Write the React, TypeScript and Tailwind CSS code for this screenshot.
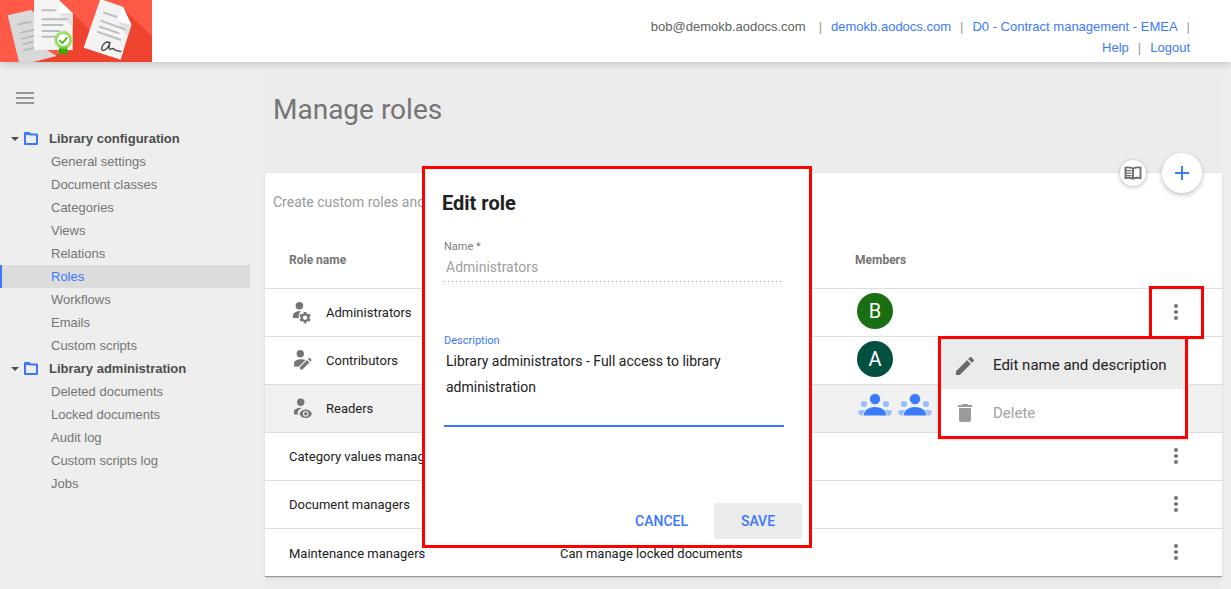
import type { ReactNode } from "react";
import { MdAdd, MdDelete, MdEdit, MdMoreVert } from "react-icons/md";

const sections = [
  {
    title: "Library configuration",
    items: [
      "General settings",
      "Document classes",
      "Categories",
      "Views",
      "Relations",
      "Roles",
      "Workflows",
      "Emails",
      "Custom scripts",
    ],
  },
  {
    title: "Library administration",
    items: ["Deleted documents", "Locked documents", "Audit log", "Custom scripts log", "Jobs"],
  },
];

function Logo() {
  return (
    <svg viewBox="0 0 456 186" className="h-[62px] w-[152px] shrink-0" role="img" aria-label="Contracts">
      <rect width="456" height="186" fill="#ff5a47" />
      <path d="M178 0L366 186H60L165 166L216 150V39Z" fill="#ee432e" />
      <path d="M366 22L456 110V186H340Z" fill="#ee432e" />
      <path d="M23 46L92 30L104 38L140 150L170 168L100 186H57Z" fill="#d9d9d9" />
      <g stroke="#b9babd" strokeWidth="5">
        <path d="M53 74L94 65M58 99L104 89M63 117L104 107M68 134L104 124M70 151L104 143" />
      </g>
      <path d="M102 0H176L218 40V150H102Z" fill="#f4f4f4" />
      <path d="M176 0L218 40V82L176 40Z" fill="#e2e2e2" />
      <path d="M176 0L218 40H176Z" fill="#fff" />
      <path d="M125 31H167M125 58H202M125 75H190M125 93H180M125 110H168" stroke="#bcbdc2" strokeWidth="6" />
      <path d="M177 138H202V168L190 158L177 168Z" fill="#2fae00" />
      <circle cx="190" cy="120" r="25" fill="none" stroke="#8bd84e" strokeWidth="5" strokeDasharray="5 2.85" />
      <circle cx="190" cy="120" r="21" fill="#fff" stroke="#8bd84e" strokeWidth="5" />
      <path d="M178 120L187 129L202 112" fill="none" stroke="#37b500" strokeWidth="5" />
      <path d="M301 -3L310 0L369 20L394 74L362 179L251 143Z" fill="#f3f3f3" />
      <path d="M354 64L394 74L383 111Z" fill="#e0e1e4" />
      <path d="M369 21L394 74L354 64Z" fill="#fff" />
      <path d="M310 37L351 51M302 62L375 88M297 79L358 100M291 95L363 120" stroke="#bcbdc2" strokeWidth="6" />
      <path
        d="M330 130C322 120 306 132 305 146C305 156 320 150 326 138L330 126L327 143C328 155 337 141 342 147C344 153 350 150 364 155"
        fill="none"
        stroke="#444"
        strokeWidth="4"
      />
    </svg>
  );
}

function FolderIcon() {
  return (
    <svg viewBox="0 0 14 13" className="h-[13px] w-[14px]" aria-hidden="true">
      <path d="M1 3V1H5L6.500 2.500H13V12H1Z" fill="none" stroke="#3b78ff" strokeWidth="2" strokeLinejoin="round" />
      <path d="M1 1H5.500L7 3H1Z" fill="#3b78ff" />
    </svg>
  );
}

function Sidebar() {
  return (
    <aside className="w-[250px] shrink-0 pt-[29px] font-['Liberation_Sans',Arial,sans-serif] text-[13px]">
      <button type="button" aria-label="Toggle menu" className="ml-4 block py-px">
        <svg viewBox="0 0 18 12" className="h-3 w-[18px]" aria-hidden="true">
          <path d="M0 1H18M0 6H18M0 11H18" stroke="#979797" strokeWidth="2" />
        </svg>
      </button>
      <nav className="mt-[22px]" aria-label="Library">
        {sections.map((section) => (
          <div key={section.title}>
            <h2 className="flex h-[23px] items-center pl-[11px] font-bold text-[#4d4d4d]">
              <svg viewBox="0 0 8 4" className="mr-[5px] h-1 w-2" aria-hidden="true">
                <path d="M0 0H8L4 4Z" fill="#4d4d4d" />
              </svg>
              <FolderIcon />
              <span className="ml-[11px]">{section.title}</span>
            </h2>
            <ul>
              {section.items.map((item) => (
                <li key={item}>
                  <a
                    href="#"
                    className={
                      item === "Roles"
                        ? "flex h-[23px] items-center border-l-2 border-[#3b78ff] bg-[#dcdcdc] pl-[49px] text-[#3b78ff]"
                        : "flex h-[23px] items-center pl-[51px] text-[#757575]"
                    }
                  >
                    {item}
                  </a>
                </li>
              ))}
            </ul>
          </div>
        ))}
      </nav>
    </aside>
  );
}

const gear =
  "M19.14 12.94c.04-.3.06-.61.06-.94 0-.32-.02-.64-.07-.94l2.03-1.58c.18-.14.23-.41.12-.61l-1.920-3.320c-.12-.22-.37-.29-.59-.22l-2.390.96c-.5-.38-1.030-.7-1.620-.94l-.36-2.540c-.04-.24-.24-.41-.48-.41h-3.840c-.24 0-.43.17-.47.41l-.36 2.540c-.59.24-1.130.57-1.620.94l-2.390-.96c-.22-.08-.47 0-.59.22L2.740 8.870c-.12.21-.08.47.12.61l2.030 1.580c-.05.3-.09.63-.09.94s.02.64.07.94l-2.030 1.580c-.18.14-.23.41-.12.61l1.920 3.320c.12.22.37.29.59.22l2.390-.96c.5.38 1.030.7 1.620.94l.36 2.540c.05.24.24.41.48.41h3.840c.24 0 .44-.17.47-.41l.36-2.540c.59-.24 1.130-.56 1.620-.94l2.390.96c.22.08.47 0 .59-.22l1.920-3.320c.12-.22.07-.47-.12-.61l-2.010-1.580zM12 15.600c-1.980 0-3.600-1.620-3.600-3.600s1.620-3.600 3.600-3.600 3.600 1.620 3.600 3.600-1.620 3.600-3.600 3.600z";

function RoleIcon({ kind }: { kind: "gear" | "pencil" | "eye" }) {
  return (
    <svg viewBox="0 0 24 24" className="h-6 w-6" fill="#757575" aria-hidden="true">
      {kind === "gear" && (
        <>
          <circle cx="9.400" cy="5.700" r="3.800" />
          <path d="M3 18V15.500C3 12.300 6.500 11 11 10.900C9 12.500 8.200 15.500 8.900 18Z" />
          <path d={gear} transform="translate(8 10.600) scale(0.59)" />
        </>
      )}
      {kind === "pencil" && (
        <>
          <circle cx="10.300" cy="5.700" r="3.700" />
          <path d="M4 18.500V15.500C4 12.500 8 11.200 11 11.200C13 11.200 14.500 11.600 15.500 12.100L9 18.500Z" />
          <path d="M9.800 21.700V19L17 11.800L19.700 14.500L12.500 21.700ZM17.700 11.100L18.800 10Q19.400 9.400 20 10L21.500 11.500Q22 12.100 21.500 12.700L20.400 13.800Z" stroke="#fff" strokeWidth="0.5" />
        </>
      )}
      {kind === "eye" && (
        <>
          <circle cx="10.700" cy="6.200" r="3.700" />
          <path d="M4 18.500V16C4 13 7.500 11.800 12 11.800C9.500 13 8 15 7.500 16.500Q7.800 17.700 8.500 18.500Z" />
          <path
            d="M15.700 13.500C12.800 13.500 10.400 15.200 9.400 17.800C10.400 20.400 12.800 22.100 15.700 22.100S21 20.400 22 17.800C21 15.200 18.600 13.500 15.700 13.500ZM15.700 20.600A2.800 2.800 0 1 1 15.700 15A2.800 2.800 0 0 1 15.700 20.600Z"
            fillRule="evenodd"
          />
          <circle cx="15.700" cy="17.800" r="1.700" />
        </>
      )}
    </svg>
  );
}

function GroupIcon() {
  return (
    <svg viewBox="0 0 36 24" className="h-6 w-9 shrink-0" role="img" aria-label="Group">
      <g fill="#9bbcff">
        <circle cx="7" cy="12" r="3.100" />
        <circle cx="29" cy="12" r="3.100" />
        <path d="M1 18.700Q4 17.500 9 18.200V23.500H5Q2.300 23.500 1.800 22ZM35 18.700Q32 17.500 27 18.200V23.500H31Q33.700 23.500 34.200 22Z" />
      </g>
      <path d="M6 24C6 17.500 12 14 18 14S30 17.500 30 24Z" fill="#f1f1f1" />
      <path d="M6.800 23.500C6.800 17.800 12.500 15 18 15S29.200 17.800 29.200 23.500Z" fill="#3b7bff" />
      <circle cx="18" cy="7" r="5.200" fill="#3b7bff" />
    </svg>
  );
}

function Avatar({ letter, color }: { letter: string; color: string }) {
  return (
    <span className={`flex size-9 items-center justify-center rounded-full text-xl text-white ${color}`}>
      {letter}
    </span>
  );
}

function ActionsMenu() {
  return (
    <div
      role="menu"
      className="absolute top-[47px] right-[34px] z-10 w-[250px] border-3 border-[#ff0000] bg-white text-left text-[15px] shadow-sm"
    >
      <button type="button" role="menuitem" className="flex h-[50px] w-full items-center bg-[#ebebeb] pl-3 pt-1 text-[#212121]">
        <MdEdit size={24} className="text-[#6a6a6a]" />
        <span className="ml-4 whitespace-nowrap">Edit name and description</span>
      </button>
      <button type="button" role="menuitem" disabled className="flex h-[47px] w-full items-center pt-[2px] pl-3 text-[#a3a3a3]">
        <MdDelete size={24} className="text-[#9b9b9b]" />
        <span className="ml-4">Delete</span>
      </button>
    </div>
  );
}

type Role = { name: string; description?: string; icon?: ReactNode; members?: ReactNode; menu?: boolean; active?: boolean };

const roles: Role[] = [
  { name: "Administrators", icon: <RoleIcon kind="gear" />, members: <Avatar letter="B" color="bg-[#196f12]" />, menu: true },
  { name: "Contributors", icon: <RoleIcon kind="pencil" />, members: <Avatar letter="A" color="bg-[#045040]" /> },
  {
    name: "Readers",
    icon: <RoleIcon kind="eye" />,
    members: (
      <span className="flex gap-1 pb-[6px]">
        <GroupIcon />
        <GroupIcon />
        <GroupIcon />
      </span>
    ),
    active: true,
  },
  { name: "Category values managers" },
  { name: "Document managers" },
  { name: "Maintenance managers", description: "Can manage locked documents" },
];

function RolesTable() {
  return (
    <table className="w-full table-fixed border-collapse text-left text-[13px] text-[#212121]">
      <colgroup>
        <col className="w-[295px]" />
        <col className="w-[295px]" />
        <col />
        <col className="w-[92px]" />
      </colgroup>
      <thead>
        <tr className="h-14 text-xs text-[#757575]">
          <th className="pl-6 font-bold">Role name</th>
          <th />
          <th className="font-bold">Members</th>
          <th />
        </tr>
      </thead>
      <tbody>
        {roles.map((role) => (
          <tr key={role.name} className={role.active ? "h-12 border-t border-[#dedede] bg-[#f1f1f1]" : "h-12 border-t border-[#dedede]"}>
            <td className="p-0 pl-6">
              <span className="flex items-center whitespace-nowrap">
                {role.icon && <span className="mr-3 pl-px">{role.icon}</span>}
                <span className="pt-[2px]">{role.name}</span>
              </span>
            </td>
            <td className="p-0 pt-[2px] whitespace-nowrap">{role.description}</td>
            <td className="p-0 pb-[2px] pl-[2px]">{role.members}</td>
            <td className="relative p-0">
              <button type="button" aria-label={`Actions for ${role.name}`} className="ml-[34px] block text-[#757575]">
                <MdMoreVert size={24} />
              </button>
              {role.menu && (
                <>
                  <span className="absolute -top-[3px] right-[18px] z-20 h-[53px] w-[55px] border-3 border-[#ff0000]" />
                  <ActionsMenu />
                </>
              )}
            </td>
          </tr>
        ))}
      </tbody>
    </table>
  );
}

function EditRoleDialog() {
  return (
    <form
      role="dialog"
      aria-labelledby="dialog-title"
      className="absolute top-[166px] left-[422px] z-30 w-[390px] border-3 border-[#ff0000] bg-white px-[7px] pt-[22px] pb-[6px]"
    >
      <h2 id="dialog-title" className="pl-[10px] text-xl leading-6 font-bold text-[#212121]">
        Edit role
      </h2>
      <div className="mr-[18px] ml-3">
        <label htmlFor="role-name" className="mt-6 block text-[11px] leading-4 text-[#7d7d7d]">
          Name *
        </label>
        <input
          id="role-name"
          disabled
          defaultValue="Administrators"
          className="block h-[26px] w-full bg-transparent px-[2px] pb-[3px] text-sm text-[#9e9e9e]"
        />
        <div className="h-px bg-[repeating-linear-gradient(to_right,#999_0,#999_1px,transparent_1px,transparent_4px)]" />
        <label htmlFor="role-description" className="mt-[51px] block text-[11px] leading-4 text-[#3b78ff]">
          Description
        </label>
        <textarea
          id="role-description"
          defaultValue="Library administrators - Full access to library administration"
          className="-mt-px block h-[79px] w-full resize-none border-b-2 border-[#3b78ff] px-[2px] text-sm leading-[26px] text-[#212121] outline-none"
        />
      </div>
      <div className="mt-[76px] flex justify-end text-sm font-medium text-[#3b78ff]">
        <button type="button" className="h-9 px-[26px]">
          CANCEL
        </button>
        <button type="button" className="h-9 w-[88px] rounded-xs bg-[#ebebeb]">
          SAVE
        </button>
      </div>
    </form>
  );
}

function Header() {
  const bar = <span className="text-[#9a9a9a]">|</span>;
  return (
    <header className="relative z-10 flex h-[62px] items-start justify-between bg-white font-['Liberation_Sans',Arial,sans-serif] text-[13px] leading-[21px] shadow-[0_1px_8px_rgba(0,0,0,0.22)]">
      <Logo />
      <div className="pt-4 pr-[41px] text-[#3b78ff]">
        <div className="flex justify-end gap-[9px]">
          <span className="mr-1 text-[#616161]">bob@demokb.aodocs.com</span>
          {bar}
          <a href="#">demokb.aodocs.com</a>
          {bar}
          <a href="#">D0 - Contract management - EMEA</a>
          {bar}
        </div>
        <div className="flex justify-end gap-[9px]">
          <a href="#">Help</a>
          {bar}
          <a href="#">Logout</a>
        </div>
      </div>
    </header>
  );
}

export default function App() {
  return (
    <div className="relative flex min-h-screen flex-col bg-[#eeeeee] font-[Roboto,sans-serif]">
      <Header />
      <div className="flex flex-1">
        <Sidebar />
        <main className="mt-[15px] mr-[9px] ml-[15px] min-w-0 flex-1 bg-[#ececec]">
          <h1 className="h-24 pt-[17px] pl-2 text-[28px] leading-8 text-[#757575]">Manage roles</h1>
          <section className="relative rounded-t-xs border-b border-[#999] bg-white shadow-sm">
            <div className="absolute -top-5 right-5 flex items-center gap-4">
              <button
                type="button"
                aria-label="Documentation"
                className="flex size-[26px] items-center justify-center rounded-full bg-white shadow-[0_1px_4px_rgba(0,0,0,0.3)]"
              >
                <svg viewBox="0 0 18 14" className="h-[14px] w-[18px]" fill="none" stroke="#6e6e6e" aria-hidden="true">
                  <path d="M9 2.500Q5 0.700 1.500 1.700V12.200Q5 11.200 9 12.700Q13 11.200 16.500 12.200V1.700Q13 0.700 9 2.500V12.700" strokeWidth="1.900" />
                  <path d="M2 4.700H7.500M2 7.200H7.500M2 9.700H7.500" strokeWidth="1.300" />
                </svg>
              </button>
              <button
                type="button"
                aria-label="Add role"
                className="flex size-10 items-center justify-center rounded-full bg-white text-[#3b78ff] shadow-[0_2px_5px_rgba(0,0,0,0.25)]"
              >
                <MdAdd size={24} />
              </button>
            </div>
            <p className="h-[59px] pt-[19px] pl-2 text-sm text-[#999]">Create custom roles and</p>
            <RolesTable />
          </section>
        </main>
      </div>
      <EditRoleDialog />
    </div>
  );
}
